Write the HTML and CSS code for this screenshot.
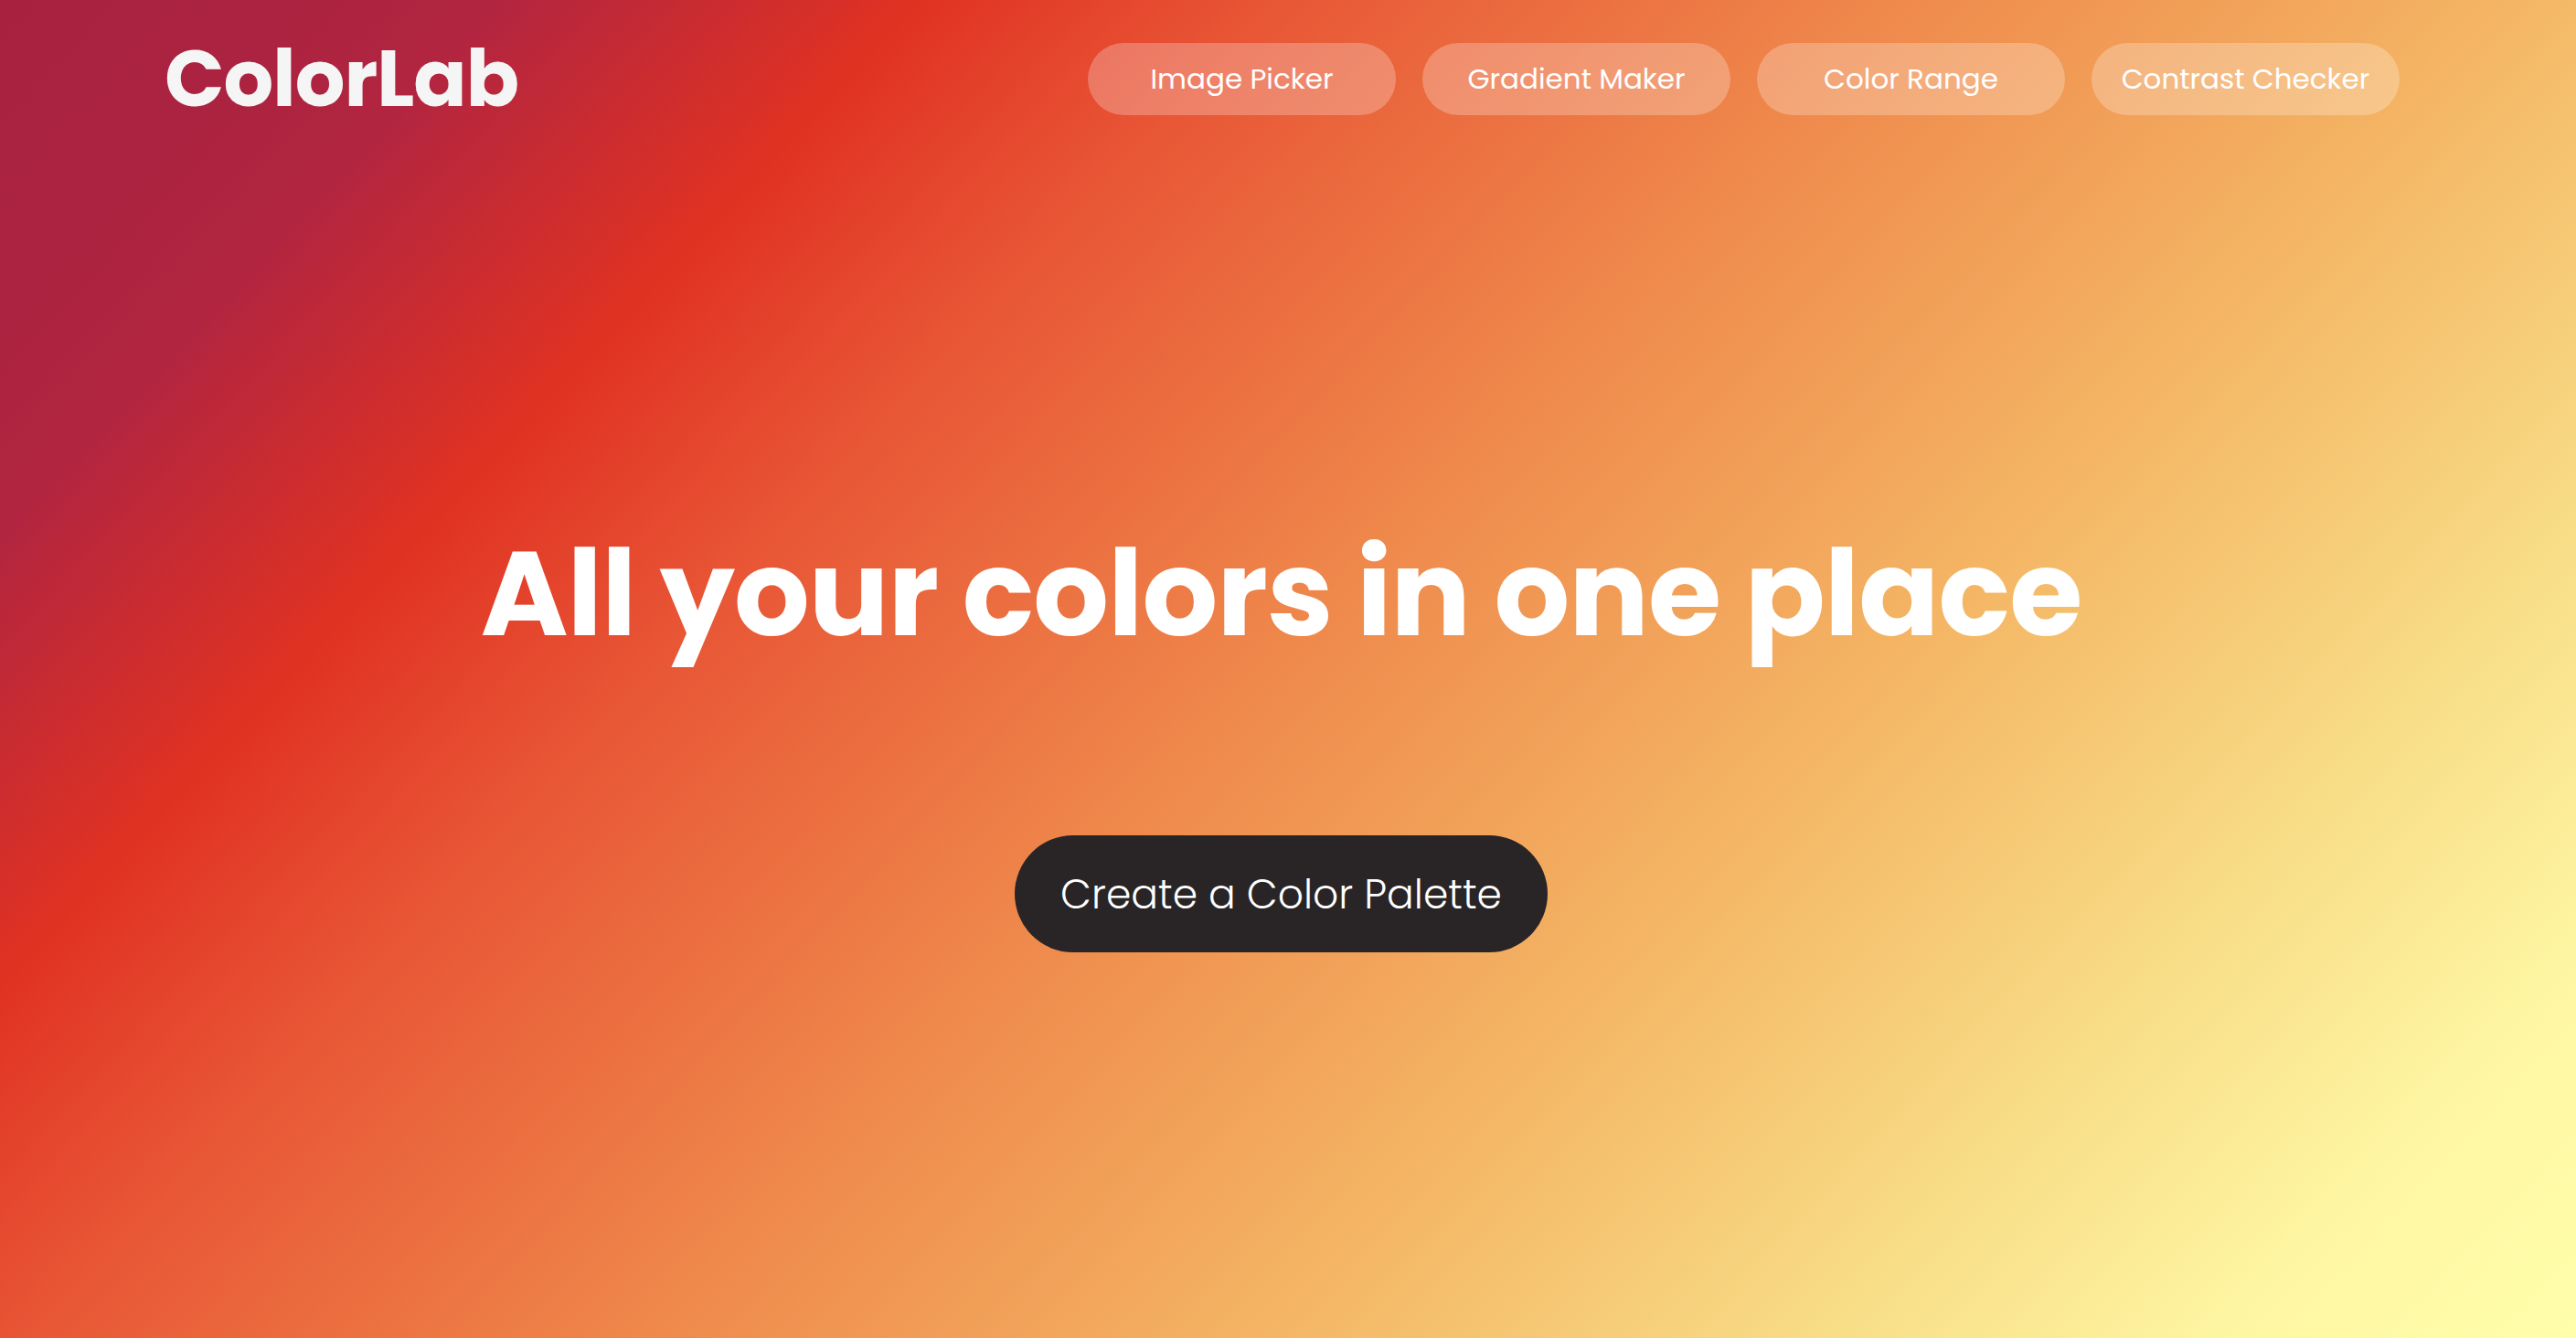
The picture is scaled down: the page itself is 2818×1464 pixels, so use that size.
FILE: index.html
```html
<!DOCTYPE html>
<html lang="en">
	<head>
		<meta charset="UTF-8">
		<title>ColorLab</title>
		<meta name="viewport" content="width=device-width, initial-scale=1.0">
		<link rel="stylesheet" href="styles.css">
	</head>
	<body>
		<header class="TopBar">
			<div class="Logo">ColorLab</div>
			<nav class="NavLinks">
				<a class="NavPill" href="#">Image Picker</a>
				<a class="NavPill" href="#">Gradient Maker</a>
				<a class="NavPill" href="#">Color Range</a>
				<a class="NavPill" href="#">Contrast Checker</a>
			</nav>
		</header>
		<main class="Hero">
			<h1 class="HeroTitle">All your colors in one place</h1>
			<a class="HeroButton" href="#">Create a Color Palette</a>
		</main>
	</body>
</html>
```

FILE: styles.css
```css
html, body {
	height: 100%;
}

body {
	margin: 0;
	font-family: "Poppins", "Inter", "Noto Sans", sans-serif;
	color: #fff;
	background: linear-gradient(133deg, #a8223f 0%, #ab2340 8%, #b22540 13%, #e03222 24%, #e85535 33%, #ef8a4c 50%, #f4b665 66%, #f8dc86 80%, #fef6a3 91%, #fffeaa 100%);
	overflow: hidden;
}

.TopBar {
	display: flex;
	align-items: center;
	justify-content: space-between;
	padding: 22px 193px 0 180px;
}

.Logo {
	font-size: 86px;
	font-weight: 700;
	letter-spacing: -1px;
	color: #f5f5f5;
}

.NavLinks {
	display: flex;
	gap: 29px;
}

.NavPill {
	display: flex;
	align-items: center;
	justify-content: center;
	width: 337px;
	height: 79px;
	border-radius: 40px;
	background: rgba(255, 255, 255, .25);
	color: #fff;
	text-decoration: none;
	font-size: 31px;
	font-weight: 400;
}

.Hero {
	display: flex;
	flex-direction: column;
	align-items: center;
	padding-right: 15px;
}

.HeroTitle {
	margin: 421px 0 0;
	font-size: 130px;
	font-weight: 700;
	letter-spacing: -1px;
	line-height: 1.2;
}

.HeroButton {
	margin-top: 186px;
	display: flex;
	align-items: center;
	justify-content: center;
	width: 583px;
	height: 128px;
	border-radius: 64px;
	background: #292526;
	color: #fff;
	text-decoration: none;
	font-size: 44px;
	font-weight: 300;
}
```
